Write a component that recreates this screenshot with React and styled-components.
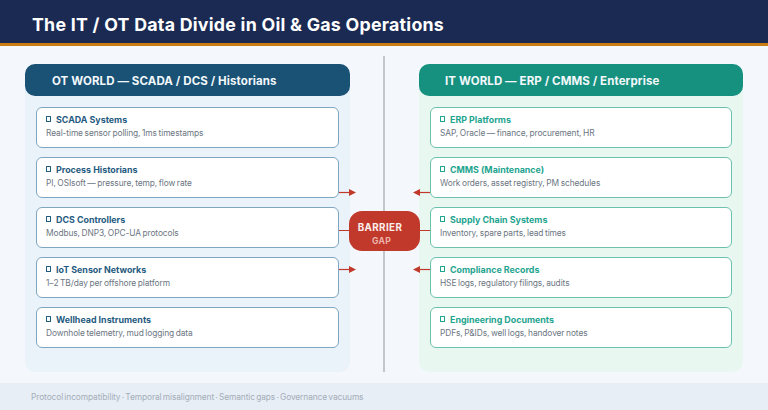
import React from "react";
import styled, { createGlobalStyle } from "styled-components";

const Global = createGlobalStyle`
  html, body { margin: 0; padding: 0; }
  body { width: 768px; height: 410px; overflow: hidden; background: #f4f8fc; font-family: Inter, "Liberation Sans", sans-serif; }
`;
const Page = styled.div`
  width: 768px; height: 410px; display: flex; flex-direction: column; background: #f4f8fc;
`;
const Header = styled.header`
  height: 46px; flex: none; box-sizing: border-box; display: flex; align-items: center; padding: 5px 0 0 32px;
  background: #1a2a52; border-bottom: 3px solid #ca7d12;
`;
const Title = styled.h1`
  margin: 0; color: #fff; font-size: 17.8px; font-weight: 700; letter-spacing: 0.25px; white-space: nowrap;
`;
const Main = styled.main`
  position: relative; flex: 1; display: grid; grid-template-columns: 325px 69px 324px; padding: 18px 25px 11px 25px;
`;
const Panel = styled.section`
  background: ${p => p.$tint}; border-radius: 10px; display: flex; flex-direction: column;
`;
const PanelHead = styled.div`
  height: 32px; flex: none; box-sizing: border-box; display: flex; align-items: center; padding: 1px 0 0 ${p => p.$indent}px; border-radius: 10px;
  background: ${p => p.$color}; color: #f2f8fb; font-size: 11.5px; font-weight: 700; letter-spacing: 0.1px; white-space: nowrap;
`;
const Cards = styled.div`
  display: flex; flex-direction: column; gap: 9px; padding: 11px 11px 0;
`;
const Card = styled.article`
  height: 41px; box-sizing: border-box; background: #fff; border: 1px solid ${p => p.$border}; border-radius: 6px;
  padding: 5px 9px 0; display: flex; flex-direction: column; gap: 2px;
`;
const CardTitle = styled.div`
  display: flex; align-items: center; gap: 5px; height: 12px; color: ${p => p.$color};
  font-size: 8.9px; font-weight: 700; white-space: nowrap;
`;
const Tofu = styled.span`
  width: 5px; height: 6px; flex: none; box-sizing: border-box; border: 1.3px solid ${p => p.$color}; border-radius: 0.5px;
`;
const CardText = styled.div`
  color: #6c7682; font-size: 8.4px; letter-spacing: -0.1px; word-spacing: -0.6px; line-height: 12px; white-space: nowrap;
`;
const Center = styled.div`
  display: flex; justify-content: center; margin-top: -8px; padding-right: 1px;
`;
const Divider = styled.div`
  width: 2px; background: #c3c7cc;
`;
const Barrier = styled.div`
  position: absolute; left: 349px; top: 165px; width: 71px; height: 40px; box-sizing: border-box; padding: 6px 9px 0 0;
  border-radius: 13px; background: #c0392b;
  display: flex; flex-direction: column; align-items: center; justify-content: center; gap: 3px;
`;
const BarrierTop = styled.span`
  color: #fbeeec; font-size: 9.8px; line-height: 11px; font-weight: 700; letter-spacing: 0.4px;
`;
const BarrierSub = styled.span`
  color: #eeb3ab; font-size: 8.6px; line-height: 10px; font-weight: 700; letter-spacing: 0.3px; margin-left: 3px;
`;
const Connector = styled.div`
  position: absolute; left: ${p => p.$x}px; top: 184px; width: 10px; height: 1px; background: #c0392b;
`;
const ArrowSvg = styled.svg`
  position: absolute; left: ${p => p.$x}px; top: ${p => p.$y}px; width: 17px; height: 9px;
`;
const Footer = styled.footer`
  height: 27px; flex: none; display: flex; align-items: center; padding-left: 31px; background: #e8eef6;
  color: #a3adb8; font-size: 8.4px; letter-spacing: -0.1px; word-spacing: -1px; white-space: nowrap;
`;

const ot = [
  ["SCADA Systems", "Real-time sensor polling, 1ms timestamps"],
  ["Process Historians", "PI, OSIsoft — pressure, temp, flow rate"],
  ["DCS Controllers", "Modbus, DNP3, OPC-UA protocols"],
  ["IoT Sensor Networks", "1–2 TB/day per offshore platform"],
  ["Wellhead Instruments", "Downhole telemetry, mud logging data"],
];
const it = [
  ["ERP Platforms", "SAP, Oracle — finance, procurement, HR"],
  ["CMMS (Maintenance)", "Work orders, asset registry, PM schedules"],
  ["Supply Chain Systems", "Inventory, spare parts, lead times"],
  ["Compliance Records", "HSE logs, regulatory filings, audits"],
  ["Engineering Documents", "PDFs, P&IDs, well logs, handover notes"],
];

const World = ({ title, head, tint, border, color, items, indent }) => (
  <Panel $tint={tint}>
    <PanelHead $color={head} $indent={indent}>{title}</PanelHead>
    <Cards>
      {items.map(([t, d]) => (
        <Card key={t} $border={border}>
          <CardTitle $color={color}><Tofu $color={color} />{t}</CardTitle>
          <CardText>{d}</CardText>
        </Card>
      ))}
    </Cards>
  </Panel>
);

const Arrow = ({ x, y, left }) => (
  <ArrowSvg $x={x} $y={y} viewBox="0 0 17 9">
    {left
      ? <><path d="M6 4.5H17" stroke="#c0392b" strokeWidth="1.2" /><path d="M0 4.5L7 1V8Z" fill="#c0392b" /></>
      : <><path d="M0 4.5H11" stroke="#c0392b" strokeWidth="1.2" /><path d="M17 4.5L10 1V8Z" fill="#c0392b" /></>}
  </ArrowSvg>
);

export default function App() {
  return (
    <Page>
      <Global />
      <Header><Title>The IT / OT Data Divide in Oil &amp; Gas Operations</Title></Header>
      <Main>
        <World title="OT WORLD — SCADA / DCS / Historians" indent={27} head="#1a5276" tint="#eaf2fa" border="#7ea6c0" color="#1f5a80" items={ot} />
        <Center><Divider /></Center>
        <World title="IT WORLD — ERP / CMMS / Enterprise" indent={26} head="#17917f" tint="#e8f8f1" border="#6cc1ae" color="#1ea48f" items={it} />
        <Arrow x={339} y={142} />
        <Arrow x={339} y={219} />
        <Arrow x={413} y={142} left />
        <Arrow x={413} y={219} left />
        <Connector $x={339} />
        <Connector $x={420} />
        <Barrier>
          <BarrierTop>BARRIER</BarrierTop>
          <BarrierSub>GAP</BarrierSub>
        </Barrier>
      </Main>
      <Footer>Protocol incompatibility · Temporal misalignment · Semantic gaps · Governance vacuums</Footer>
    </Page>
  );
}
